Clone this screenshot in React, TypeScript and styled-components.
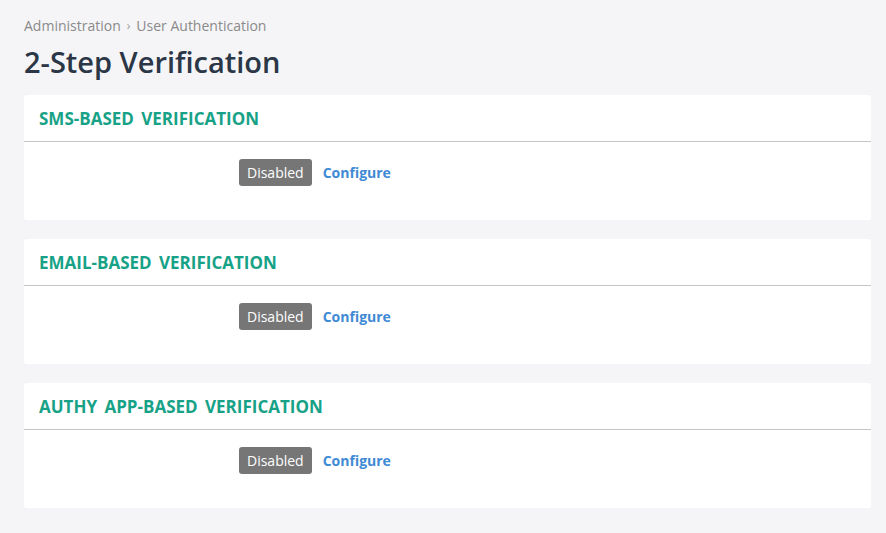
import * as React from 'react'

import styled, { createGlobalStyle } from 'styled-components'

const GlobalStyle = createGlobalStyle`
  html, body {
    margin: 0;
    padding: 0;
    background: #f5f5f7;
    font-family: "Open Sans", "Liberation Sans", sans-serif;
  }
`

const Page = styled.div`
  padding: 16px 15px 24px 24px;
`

const Breadcrumb = styled.div`
  display: flex;
  align-items: center;
  gap: 6px;
  font-size: 14px;
  color: #8a8a8a;
  line-height: 20px;
`

const Crumb = styled.span``

const Sep = styled.span`
  font-size: 12px;
  color: #9a9a9a;
`

const Title = styled.h1`
  margin: 6px 0 14px;
  font-size: 29px;
  font-weight: 600;
  color: #2b3646;
  line-height: 39px;
`

const Cards = styled.div`
  display: flex;
  flex-direction: column;
  gap: 19px;
`

const Card = styled.section`
  background: #fff;
  border-radius: 3px;
`

const CardHeader = styled.div`
  height: 46px;
  padding: 0 15px;
  display: flex;
  align-items: center;
  border-bottom: 1px solid #c4c4c4;
`

const CardTitle = styled.h2`
  margin: 0;
  font-size: 17px;
  font-weight: 700;
  color: #17a287;
  text-transform: uppercase;
  word-spacing: 3px;
`

const CardBody = styled.div`
  display: grid;
  grid-template-columns: 200px 1fr;
  padding: 17px 15px 34px;
`

const Controls = styled.div`
  grid-column: 2;
  display: flex;
  align-items: center;
  gap: 11px;
`

const Badge = styled.span`
  display: inline-block;
  background: #767676;
  color: #fff;
  font-size: 14px;
  line-height: 27px;
  height: 27px;
  padding: 0 8px;
  border-radius: 3px;
`

const ConfigureLink = styled.a`
  font-size: 14px;
  font-weight: 700;
  color: #3f8ad4;
  text-decoration: none;
  cursor: pointer;
`

const methods = ['SMS-based verification', 'Email-based verification', 'Authy app-based verification']

export default function App() {
  return <>
    <GlobalStyle />
    <Page>
      <Breadcrumb>
        <Crumb>Administration</Crumb>
        <Sep>›</Sep>
        <Crumb>User Authentication</Crumb>
      </Breadcrumb>
      <Title>2-Step Verification</Title>
      <Cards>
        {methods.map(name => <Card key={name}>
          <CardHeader>
            <CardTitle>{name}</CardTitle>
          </CardHeader>
          <CardBody>
            <Controls>
              <Badge>Disabled</Badge>
              <ConfigureLink>Configure</ConfigureLink>
            </Controls>
          </CardBody>
        </Card>)}
      </Cards>
    </Page>
  </>
}
